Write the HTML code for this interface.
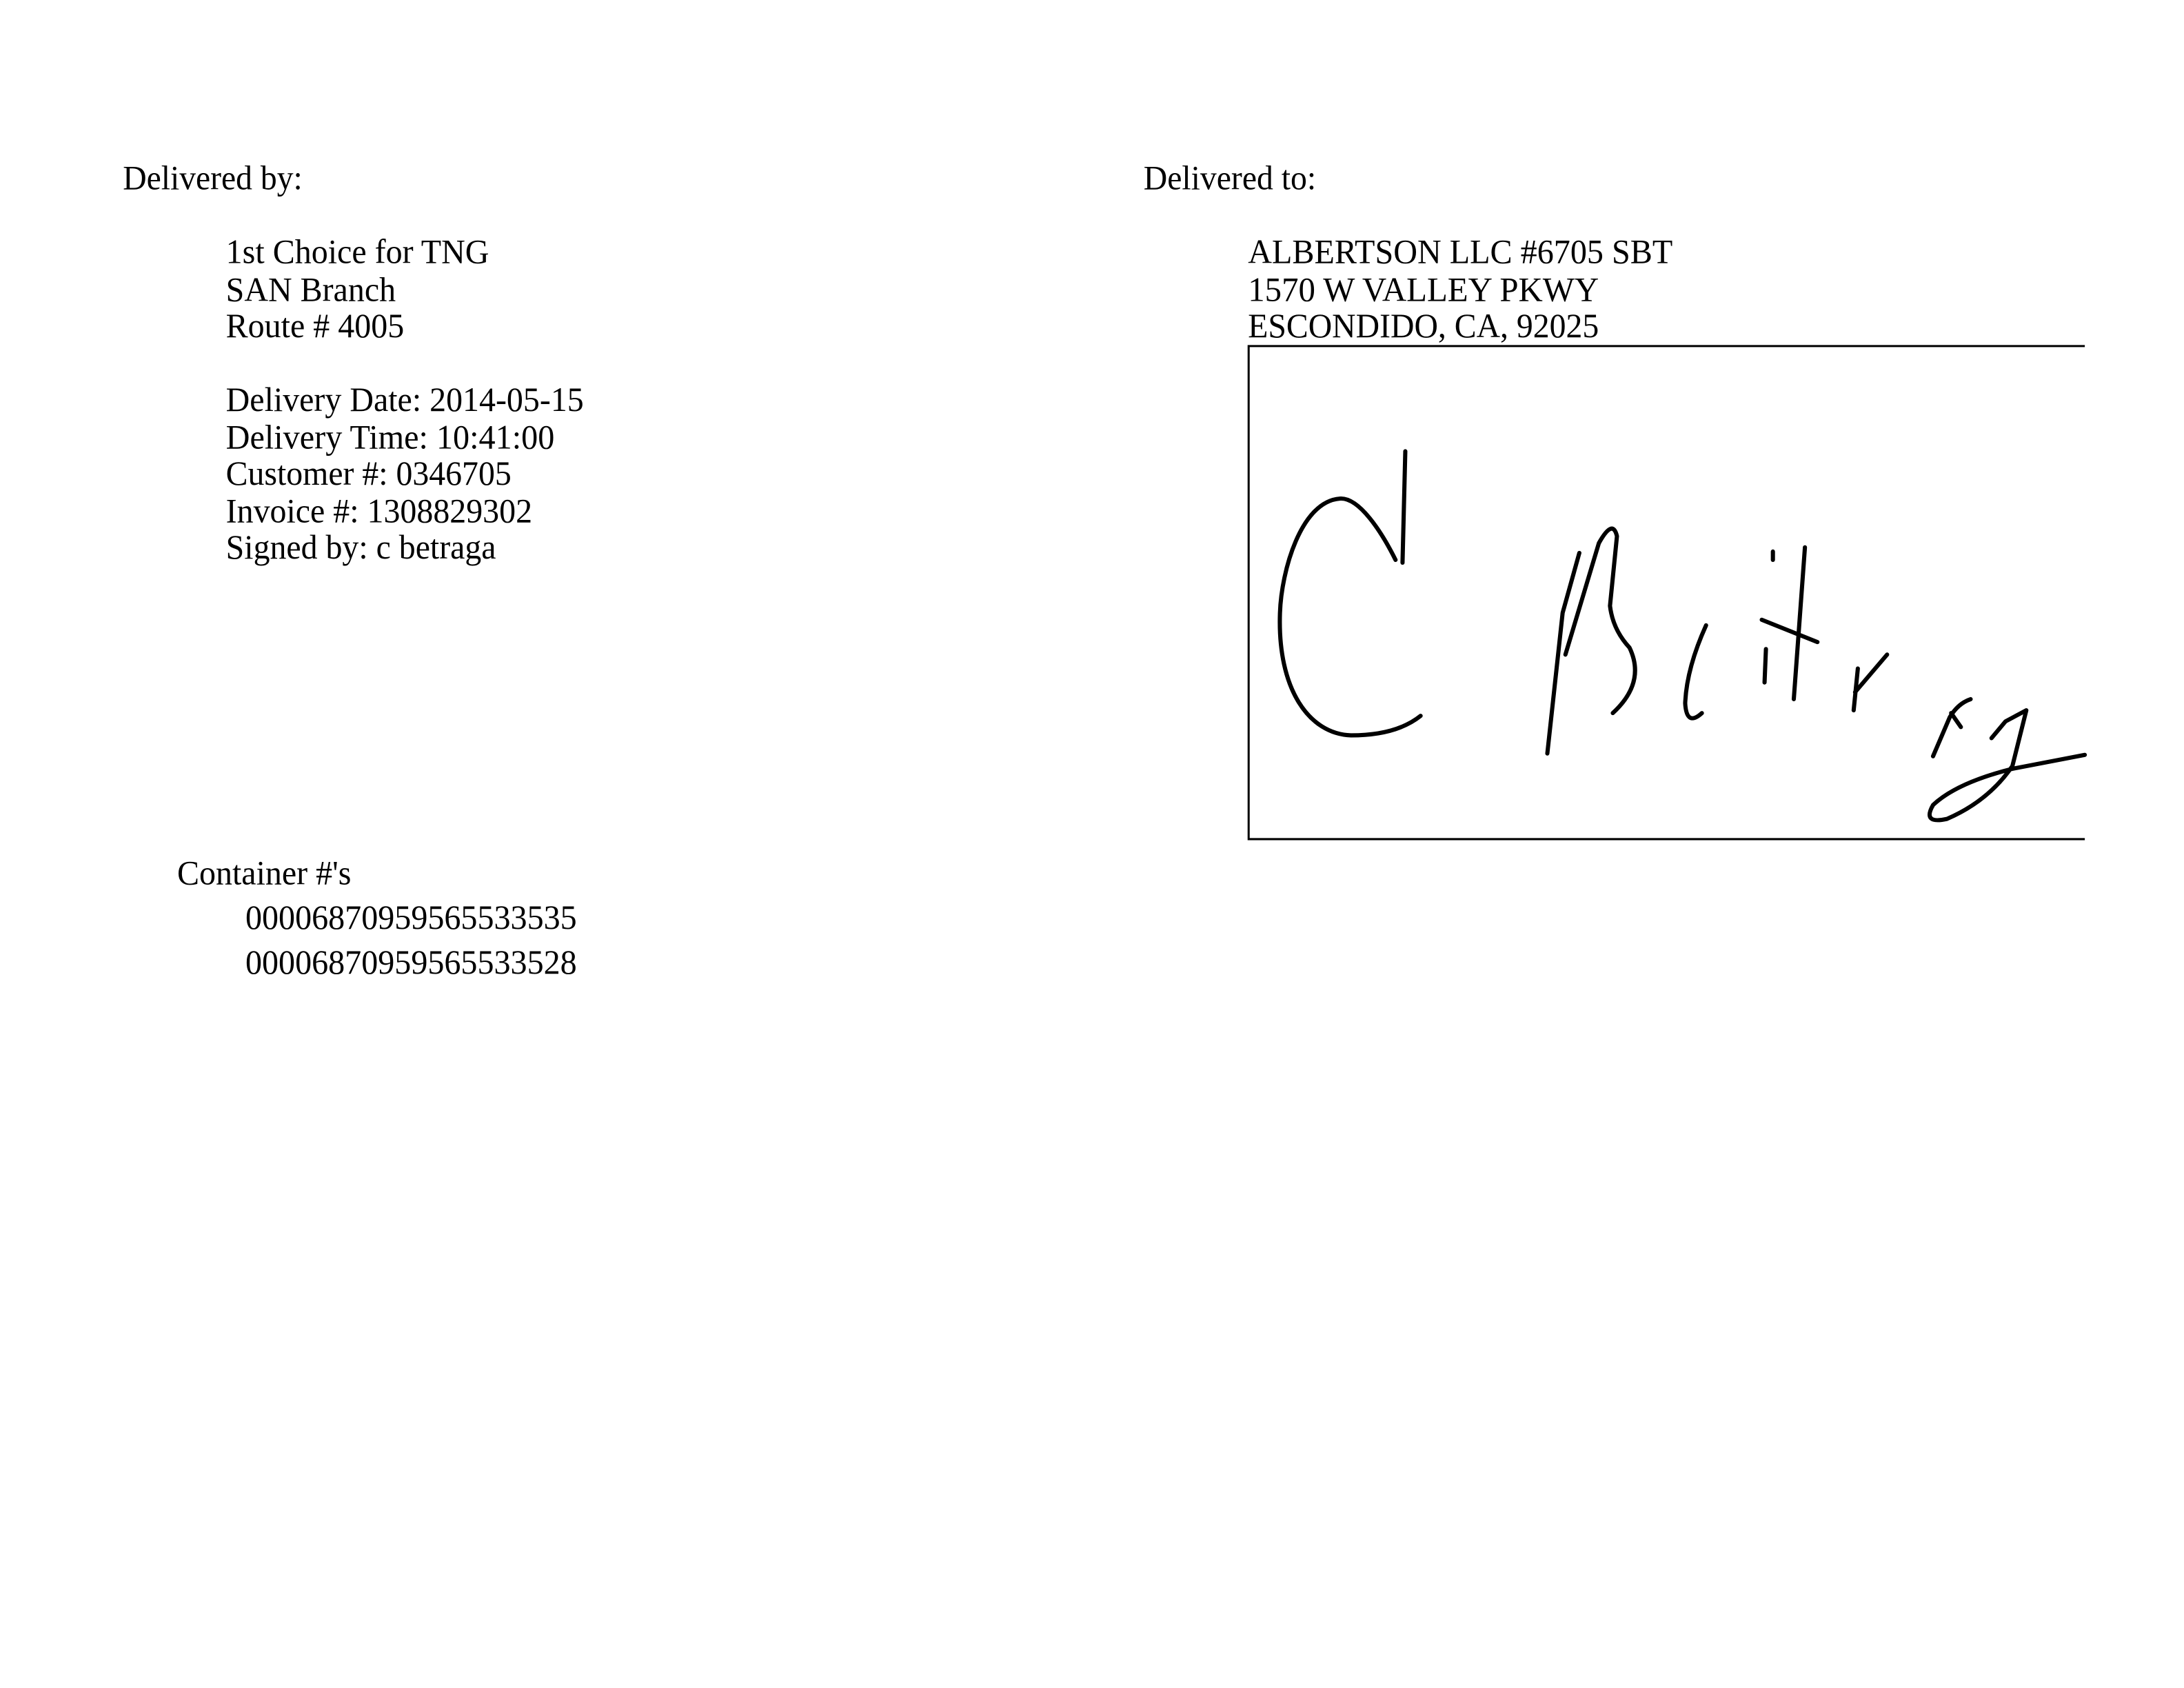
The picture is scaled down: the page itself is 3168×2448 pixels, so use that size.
<!DOCTYPE html>
<html><head><meta charset="utf-8"><style>
html,body{margin:0;padding:0;background:#fff;}
svg{display:block;}
text{font-family:"Liberation Serif",serif;font-size:24.5px;fill:#000;}
</style></head><body>
<svg width="3168" height="2448" viewBox="0 0 1568 1212" xmlns="http://www.w3.org/2000/svg">
<rect width="1568" height="1212" fill="#fff"/>
<text x="88" y="136" textLength="129" lengthAdjust="spacingAndGlyphs">Delivered by:</text>
<text x="162" y="189" textLength="189" lengthAdjust="spacingAndGlyphs">1st Choice for TNG</text>
<text x="162" y="216" textLength="122" lengthAdjust="spacingAndGlyphs">SAN Branch</text>
<text x="162" y="242" textLength="128" lengthAdjust="spacingAndGlyphs">Route # 4005</text>
<text x="162" y="295" textLength="257" lengthAdjust="spacingAndGlyphs">Delivery Date: 2014-05-15</text>
<text x="162" y="322" textLength="236" lengthAdjust="spacingAndGlyphs">Delivery Time: 10:41:00</text>
<text x="162" y="348" textLength="205" lengthAdjust="spacingAndGlyphs">Customer #: 0346705</text>
<text x="162" y="375" textLength="220" lengthAdjust="spacingAndGlyphs">Invoice #: 1308829302</text>
<text x="162" y="401" textLength="194" lengthAdjust="spacingAndGlyphs">Signed by: c betraga</text>
<text x="127" y="635" textLength="125" lengthAdjust="spacingAndGlyphs">Container #'s</text>
<text x="176" y="667" textLength="238" lengthAdjust="spacingAndGlyphs">00006870959565533535</text>
<text x="176" y="699" textLength="238" lengthAdjust="spacingAndGlyphs">00006870959565533528</text>
<text x="821" y="136" textLength="124" lengthAdjust="spacingAndGlyphs">Delivered to:</text>
<text x="896" y="189" textLength="305" lengthAdjust="spacingAndGlyphs">ALBERTSON LLC #6705 SBT</text>
<text x="896" y="216" textLength="252" lengthAdjust="spacingAndGlyphs">1570 W VALLEY PKWY</text>
<text x="896" y="242" textLength="252" lengthAdjust="spacingAndGlyphs">ESCONDIDO, CA, 92025</text>
<path d="M1497,248.5 H896.5 V602.5 H1497" fill="none" stroke="#000" stroke-width="1.5"/>
<g fill="none" stroke="#000" stroke-width="3" stroke-linecap="round" stroke-linejoin="round">
<path d="M1009,324 L1007,404"/>
<path d="M1002,402 C992,382 976,357 962,358 C934,360 920,410 919,440 C917,495 940,527 970,528 C995,528 1010,522 1020,514"/>
<path d="M1111,541 L1122,440 L1134,397"/>
<path d="M1124,470 L1148,390 Q1158,372 1161,385 L1156,435 Q1158,452 1170,465 Q1182,490 1158,512"/>
<path d="M1225,449 Q1211,480 1210,505 Q1211,522 1222,512"/>
<path d="M1273,396 L1273,402"/>
<path d="M1268,466 L1267,490"/>
<path d="M1296,393 L1288,502"/>
<path d="M1265,445 L1305,461"/>
<path d="M1334,480 L1331,510 M1332,497 L1355,470"/>
<path d="M1388,543 L1400,515 Q1406,505 1415,502 M1401,512 L1408,522"/>
<path d="M1430,530 L1440,518 L1455,510 L1445,550 Q1428,575 1398,588 Q1380,592 1388,578 Q1405,562 1445,552 L1497,542"/>
</g>
</svg>
</body></html>
